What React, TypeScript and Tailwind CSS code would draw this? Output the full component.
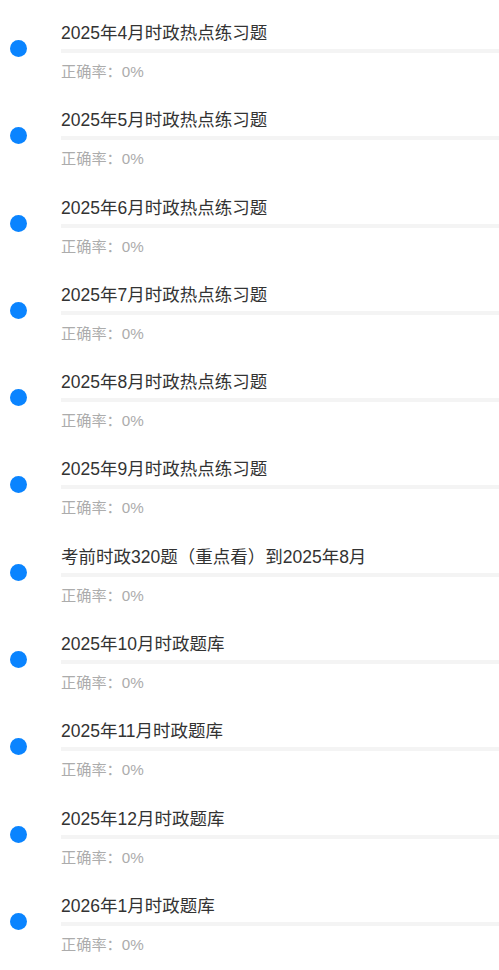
const ITEMS = [
  '2025年4月时政热点练习题',
  '2025年5月时政热点练习题',
  '2025年6月时政热点练习题',
  '2025年7月时政热点练习题',
  '2025年8月时政热点练习题',
  '2025年9月时政热点练习题',
  '考前时政320题（重点看）到2025年8月',
  '2025年10月时政题库',
  '2025年11月时政题库',
  '2025年12月时政题库',
  '2026年1月时政题库',
];

export default function App() {
  return (
    <div
      className="w-[499px] min-h-[970px] bg-white"
      style={{ fontFamily: '"Liberation Sans", "Noto Sans CJK SC", sans-serif' }}
    >
      {ITEMS.map((title) => (
        <div key={title} className="flex items-start h-[87.3px] pt-[21px]">
          {/* status dot */}
          <div className="ml-[10px] mt-[19px] w-[17px] h-[17px] rounded-full bg-[#0a84ff] shrink-0" />
          <div className="ml-[34px] flex-1 flex flex-col">
            <div className="text-[17.5px] leading-[24px] text-[#333333] whitespace-nowrap">{title}</div>
            <div className="mt-[4px] h-[4px] w-full bg-[#f4f4f4]" />
            <div className="mt-[9px] text-[15.2px] leading-[20px] text-[#acacac]">正确率：0%</div>
          </div>
        </div>
      ))}
    </div>
  );
}
